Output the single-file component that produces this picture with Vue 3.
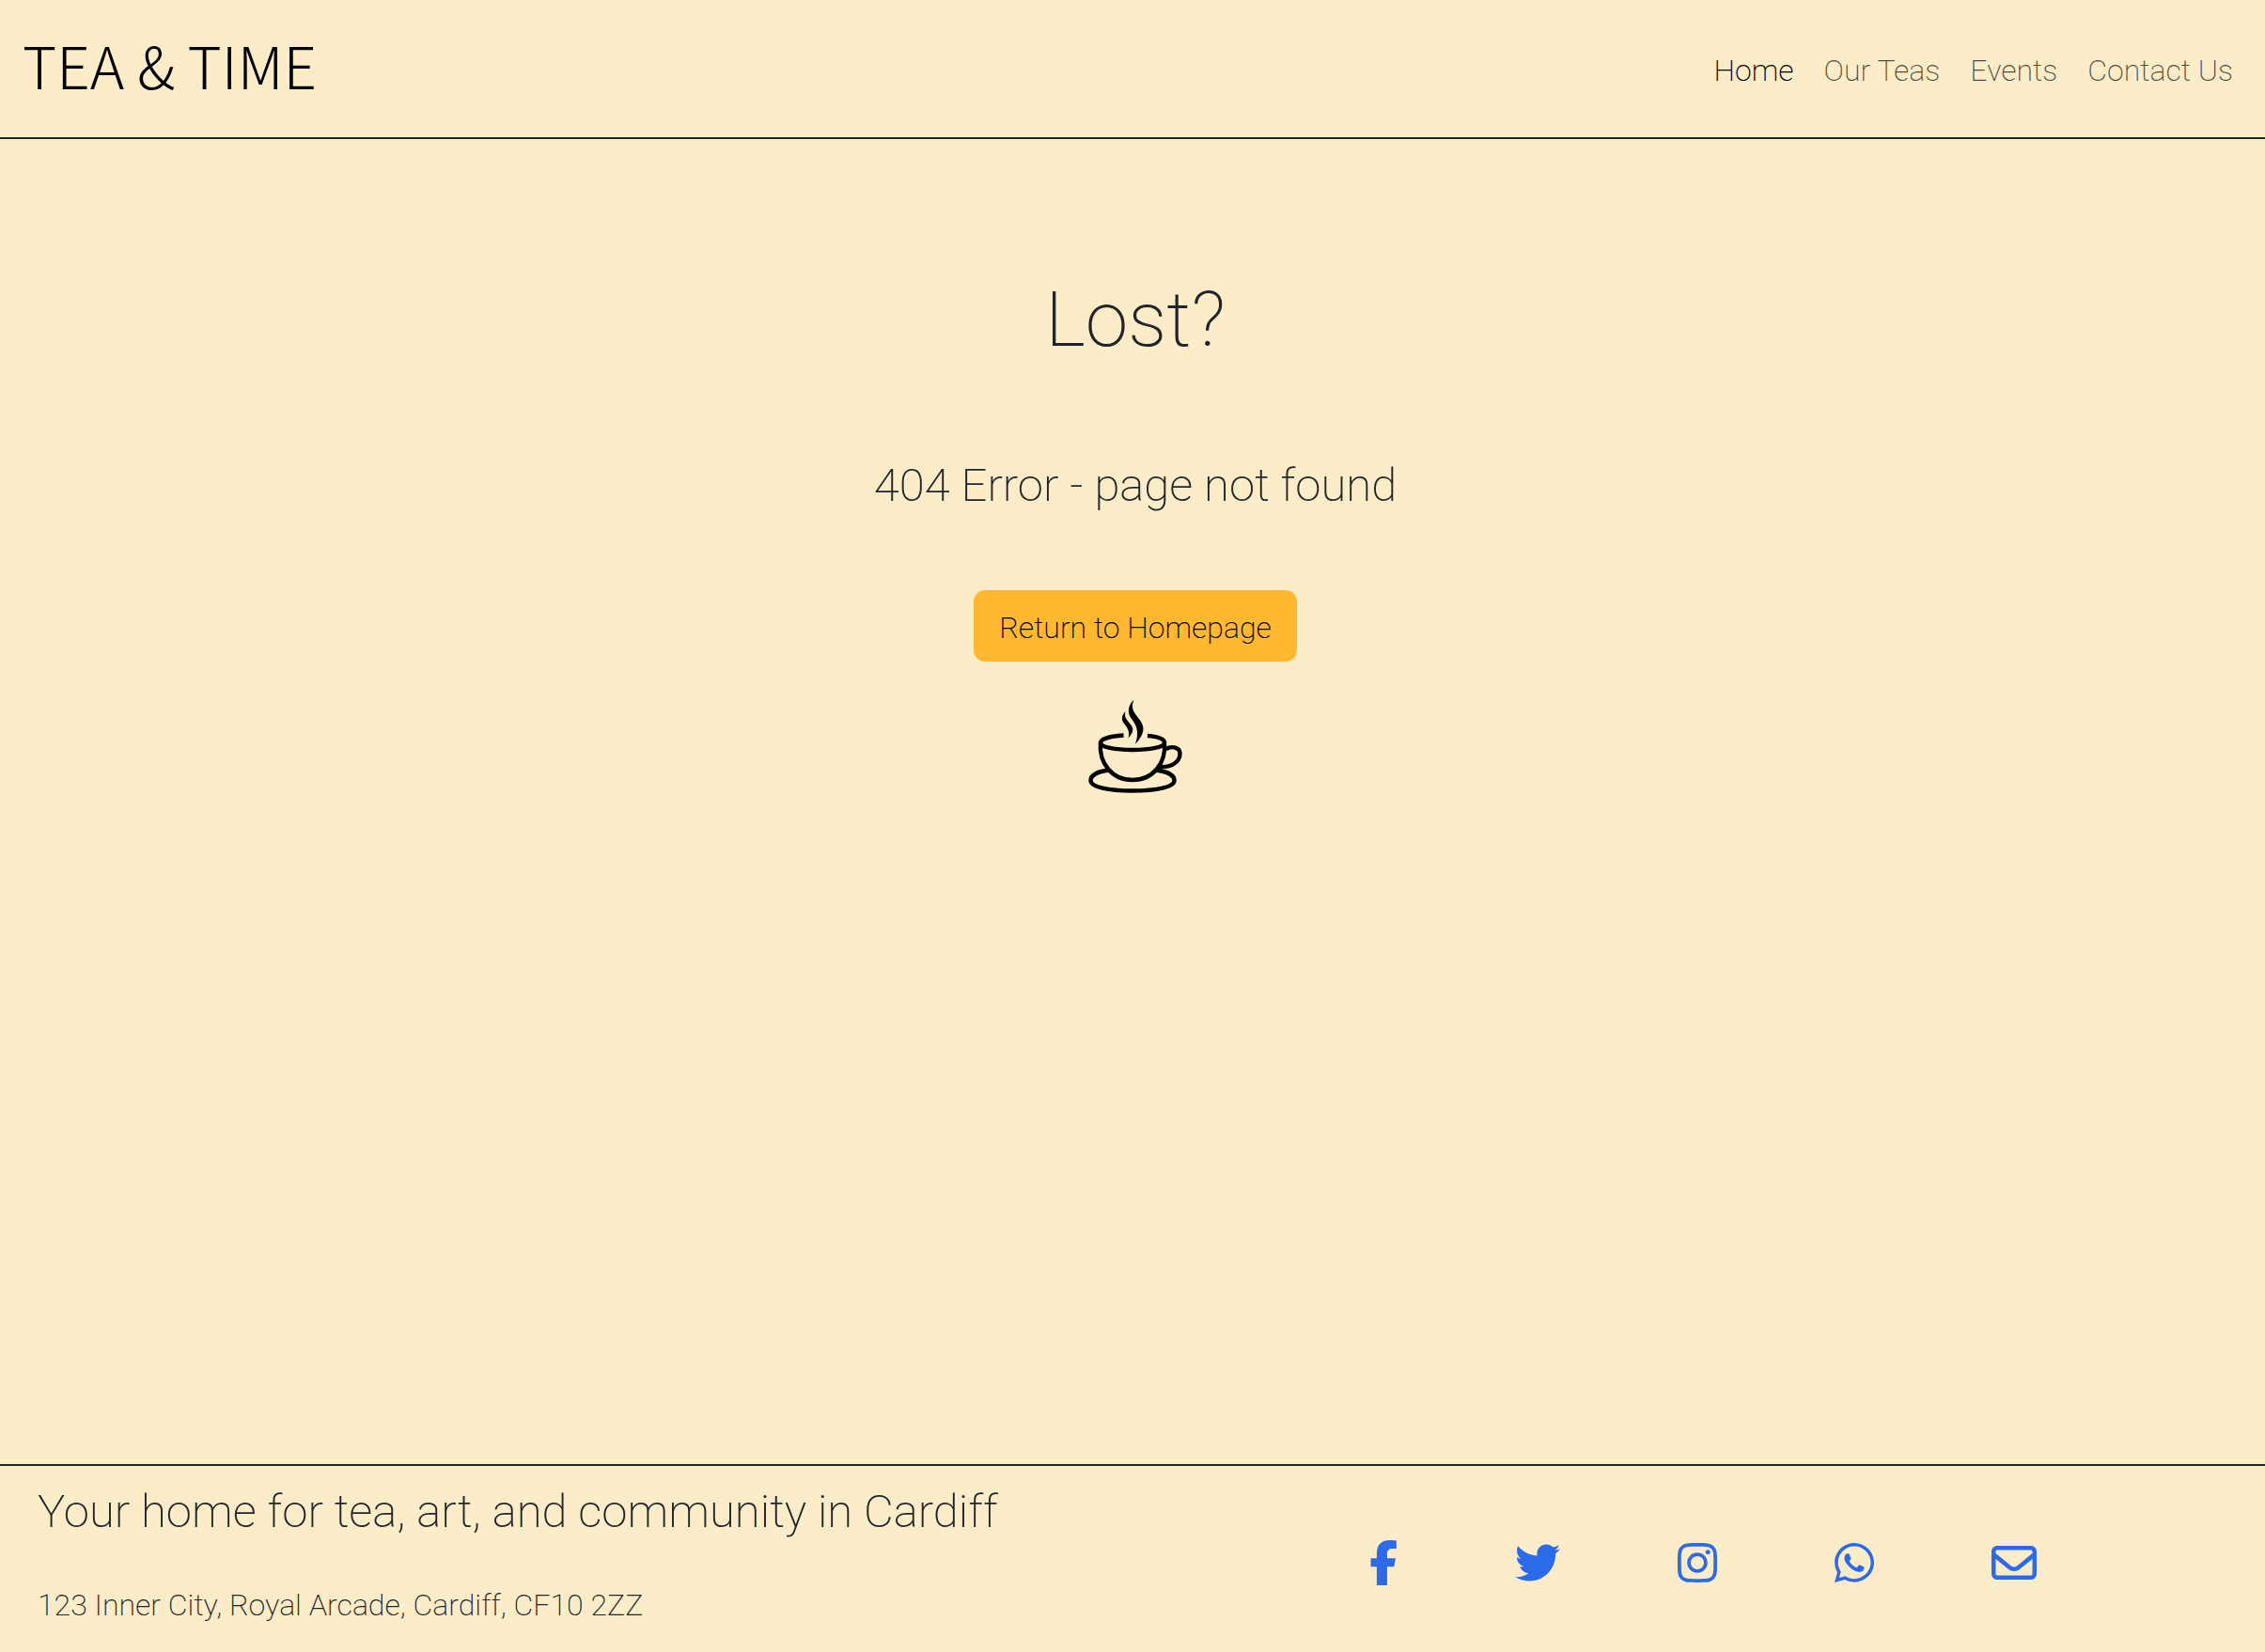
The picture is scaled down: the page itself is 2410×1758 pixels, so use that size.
<script setup>
const navItems = [
  { label: 'Home', href: '#home', active: true },
  { label: 'Our Teas', href: '#teas' },
  { label: 'Events', href: '#events' },
  { label: 'Contact Us', href: '#contact' },
]

const socials = [
  {
    name: 'Facebook',
    box: '0 0 320 512',
    width: 30,
    path: 'M84 512V301H16v-97h68v-49C84 48 138 0 238 0c28 0 53 2 70 6v91c-10-1-25-1-40-1-50 0-66 18-66 66v42h96l-17 97h-79v211z',
  },
  {
    name: 'Twitter',
    box: '0 0 512 512',
    width: 48,
    path: 'M459.37 151.716c.325 4.548.325 9.097.325 13.645 0 138.72-105.583 298.558-298.558 298.558-59.452 0-114.68-17.219-161.137-47.106 8.447.974 16.568 1.299 25.34 1.299 49.055 0 94.213-16.568 130.274-44.832-46.132-.975-84.792-31.188-98.112-72.772 6.498.974 12.995 1.624 19.818 1.624 9.421 0 18.843-1.3 27.614-3.573-48.081-9.747-84.143-51.98-84.143-102.985v-1.299c13.969 7.797 30.214 12.67 47.431 13.319-28.264-18.843-46.781-51.005-46.781-87.391 0-19.492 5.197-37.36 14.294-52.954 51.655 63.675 129.3 105.258 216.365 109.807-1.624-7.797-2.599-15.918-2.599-24.04 0-57.828 46.782-104.934 104.934-104.934 30.213 0 57.502 12.67 76.67 33.137 23.715-4.548 46.456-13.32 66.599-25.34-7.798 24.366-24.366 44.833-46.132 57.827 21.117-2.273 41.584-8.122 60.426-16.243-14.292 20.791-32.161 39.308-52.628 54.253z',
  },
  {
    name: 'Instagram',
    box: '0 0 448 512',
    width: 42,
    path: 'M224.1 141c-63.6 0-114.9 51.3-114.9 114.9s51.3 114.9 114.9 114.9S339 319.5 339 255.9 287.7 141 224.1 141zm0 189.6c-41.1 0-74.7-33.5-74.7-74.7s33.5-74.7 74.7-74.7 74.7 33.5 74.7 74.7-33.6 74.7-74.7 74.7zm146.4-194.3c0 14.9-12 26.8-26.8 26.8-14.9 0-26.8-12-26.8-26.8s12-26.8 26.8-26.8 26.8 12 26.8 26.8zm76.1 27.2c-1.7-35.9-9.9-67.7-36.2-93.9-26.2-26.2-58-34.4-93.9-36.2-37-2.1-147.9-2.1-184.9 0-35.8 1.7-67.6 9.9-93.9 36.1s-34.4 58-36.2 93.9c-2.1 37-2.1 147.9 0 184.9 1.7 35.9 9.9 67.7 36.2 93.9s58 34.4 93.9 36.2c37 2.1 147.9 2.1 184.9 0 35.9-1.7 67.7-9.9 93.9-36.2 26.2-26.2 34.4-58 36.2-93.9 2.1-37 2.1-147.8 0-184.8zM398.8 388c-7.8 19.6-22.9 34.7-42.6 42.6-29.5 11.7-99.5 9-132.1 9s-102.7 2.6-132.1-9c-19.6-7.8-34.7-22.9-42.6-42.6-11.7-29.5-9-99.5-9-132.1s-2.6-102.7 9-132.1c7.8-19.6 22.9-34.7 42.6-42.6 29.5-11.7 99.5-9 132.1-9s102.7-2.6 132.1 9c19.6 7.8 34.7 22.9 42.6 42.6 11.7 29.5 9 99.5 9 132.1s2.7 102.7-9 132.1z',
  },
  {
    name: 'WhatsApp',
    box: '0 0 448 512',
    width: 42,
    path: 'M380.9 97.1C339 55.1 283.2 32 223.9 32c-122.4 0-222 99.6-222 222 0 39.1 10.2 77.3 29.6 111L0 480l117.7-30.9c32.4 17.7 68.9 27 106.1 27h.1c122.3 0 224.1-99.6 224.1-222 0-59.3-25.2-115-67.1-157zm-157 341.6c-33.2 0-65.7-8.9-94-25.7l-6.7-4-69.8 18.3L72 359.2l-4.4-7c-18.5-29.4-28.2-63.3-28.2-98.2 0-101.7 82.8-184.5 184.6-184.5 49.3 0 95.6 19.2 130.4 54.1 34.8 34.9 56.2 81.2 56.1 130.5 0 101.8-84.9 184.6-186.6 184.6zm101.2-138.2c-5.5-2.8-32.8-16.2-37.9-18-5.1-1.9-8.8-2.8-12.5 2.8-3.7 5.6-14.3 18-17.6 21.8-3.2 3.7-6.5 4.2-12 1.4-32.6-16.3-54-29.1-75.5-66-5.7-9.8 5.7-9.1 16.3-30.3 1.8-3.7.9-6.9-.5-9.7-1.4-2.8-12.5-30.1-17.1-41.2-4.5-10.8-9.1-9.3-12.5-9.5-3.2-.2-6.9-.2-10.6-.2-3.7 0-9.7 1.4-14.8 6.9-5.1 5.6-19.4 19-19.4 46.3 0 27.3 19.9 53.7 22.6 57.4 2.8 3.7 39.1 59.7 94.8 83.8 35.2 15.2 49 16.5 66.6 13.9 10.7-1.6 32.8-13.4 37.4-26.4 4.6-13 4.6-24.1 3.2-26.4-1.3-2.5-5-3.9-10.5-6.6z',
  },
  {
    name: 'Email',
    box: '0 0 512 512',
    width: 48,
    path: 'M64 112c-8.8 0-16 7.2-16 16v22.1L220.5 291.7c20.7 17 50.4 17 71.1 0L464 150.1V128c0-8.8-7.2-16-16-16H64zM48 212.2V384c0 8.8 7.2 16 16 16h384c8.8 0 16-7.2 16-16V212.2L322 328.8c-38.4 31.5-93.7 31.5-132 0L48 212.2zM0 128C0 92.7 28.7 64 64 64h384c35.3 0 64 28.7 64 64v256c0 35.3-28.7 64-64 64H64c-35.3 0-64-28.7-64-64V128z',
  },
]
</script>

<template>
  <div class="page">
    <header class="header">
      <a class="brand" href="#home">TEA &amp; TIME</a>
      <nav class="nav" aria-label="Main">
        <a
          v-for="item in navItems"
          :key="item.label"
          class="nav-link"
          :class="{ active: item.active }"
          :href="item.href"
        >{{ item.label }}</a>
      </nav>
    </header>

    <main class="main">
      <h1 class="title">Lost?</h1>
      <h2 class="subtitle">404 Error - page not found</h2>
      <button class="home-button" type="button">Return to Homepage</button>
      <svg class="cup" viewBox="0 0 100 100" role="img" aria-label="Steaming cup of tea">
        <g fill="none" stroke="#000" stroke-width="4.4">
          <path d="M22 75.5C10 77 2.5 81 2.5 86.5C2.5 93.5 21 97.5 47 97.5S91.5 93.5 91.5 86.5C91.5 81 84 77 72 75.5" />
          <path d="M13 46C11 68 25 86 47 86S83 68 81 46" />
          <path d="M37.5 38.5C23 39.5 13 42.5 13 46.5C13 51 28 54 47 54S81 51 81 46.5C81 42.5 75 40 63 39" />
          <path d="M82.5 53C89 49.5 97.5 51 97.5 58C97.5 67 88 73 76 72" />
        </g>
        <path d="M48.5 .5C42 7 41 14 46 21C52 29 54 35 50 48C58 39 61 32 56 24C50 15 44 12 48.5 .5Z" />
        <path d="M39.5 13C35 18 35 22 38 26C43 32 44 35 42.5 41.5C47.5 36 49 32 45 27C40 21 38 19 39.5 13Z" />
      </svg>
    </main>

    <footer class="footer">
      <div class="about">
        <h2 class="tagline">Your home for tea, art, and community in Cardiff</h2>
        <p class="address">123 Inner City, Royal Arcade, Cardiff, CF10 2ZZ</p>
      </div>
      <div class="socials">
        <a v-for="s in socials" :key="s.name" class="social" href="#" :aria-label="s.name">
          <svg :viewBox="s.box" :width="s.width" height="48" aria-hidden="true">
            <path :d="s.path" fill="currentColor" />
          </svg>
        </a>
      </div>
    </footer>
  </div>
</template>

<style>
body {
  background: #fdecc8;
}
</style>

<style scoped>
.page {
  display: flex;
  flex-direction: column;
  min-height: 100vh;
  color: #212529;
  font-family: Roboto, "Liberation Sans", sans-serif;
  font-size: 32px;
  font-weight: 200;
  line-height: 38px;
}

.header {
  display: flex;
  align-items: center;
  justify-content: space-between;
  padding: 24px 34px 24px 24px;
  border-bottom: 2px solid #212529;
}

.brand {
  padding-bottom: 10px;
  color: #000;
  font-family: "Noto Sans CJK JP", sans-serif;
  font-size: 62px;
  font-weight: 300;
  line-height: 88px;
  text-decoration: none;
}

.nav {
  display: flex;
  gap: 32px;
  padding-top: 4px;
}

.nav-link {
  color: rgba(0, 0, 0, 0.7);
  text-decoration: none;
}

.nav-link.active {
  color: #000;
}

.main {
  display: flex;
  flex: 1;
  flex-direction: column;
  align-items: center;
  padding: 144px 0 40px 6px;
}

.title {
  margin: 0 0 100px;
  font-size: 82px;
  font-weight: 200;
  line-height: 96px;
}

.subtitle,
.tagline {
  margin: 0;
  font-size: 49px;
  font-weight: 200;
  line-height: 58px;
}

.home-button {
  margin: 82px 0 40px;
  padding: 21px 27px 17px;
  border: 0;
  border-radius: 12px;
  background: #ffb830;
  color: #000;
  font: inherit;
}

.cup {
  width: 100px;
  height: 100px;
}

.footer {
  display: flex;
  align-items: center;
  justify-content: space-between;
  padding: 20px 243px 31px 40px;
  border-top: 2px solid #212529;
}

.address {
  margin: 51px 0 0;
}

.socials {
  display: flex;
  gap: 125px;
  padding-top: 18px;
}

.social {
  display: flex;
  color: #2b6aea;
}
</style>
